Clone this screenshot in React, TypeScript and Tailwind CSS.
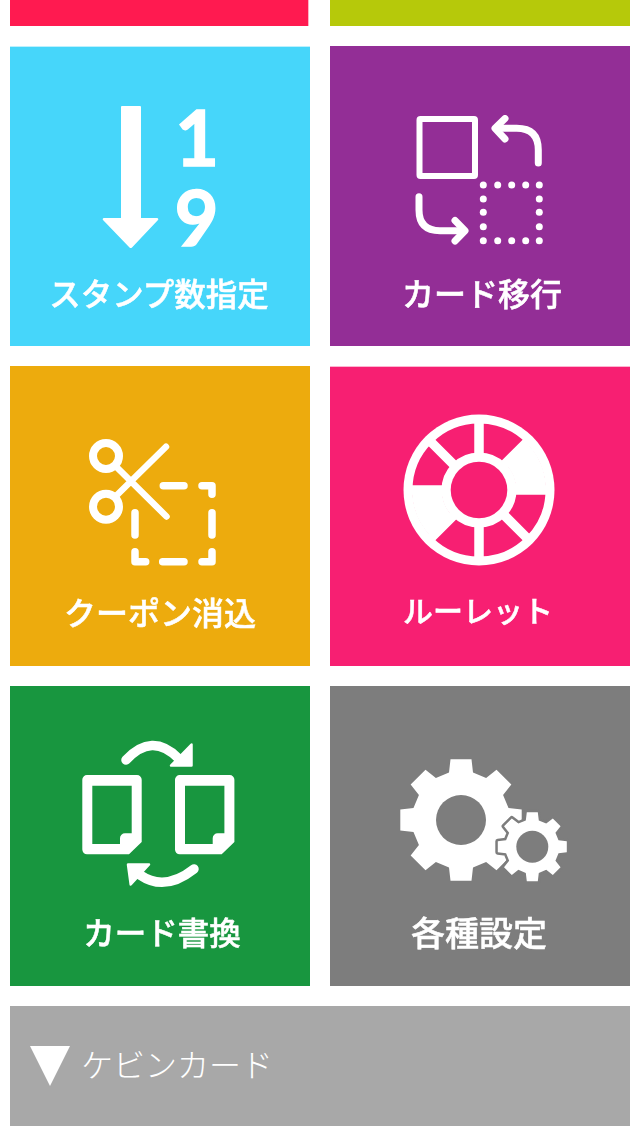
import React from "react";

const JP = "font-['Noto_Sans_CJK_JP','Noto_Sans',sans-serif]";

function gearPoints(cx: number, cy: number, outer: number, body: number, w: number, wTop: number) {
  const pts: string[] = [];
  for (let i = 0; i < 8; i++) {
    const a = (i * Math.PI) / 4;
    const c = Math.cos(a);
    const s = Math.sin(a);
    const rot = (x: number, y: number) =>
      `${(cx + x * c - y * s).toFixed(2)},${(cy + x * s + y * c).toFixed(2)}`;
    const by = -Math.sqrt(body * body - w * w);
    pts.push(rot(-w, by), rot(-wTop, -outer), rot(wTop, -outer), rot(w, by));
  }
  return pts.join(" ");
}

const Svg = ({ children }: { children: React.ReactNode }) => (
  <svg viewBox="0 0 300 225" className="block h-[225px] w-[300px] shrink-0 blur-[0.4px]">
    {children}
  </svg>
);

const StampIcon = () => (
  <Svg>
    <path
      d="M112 60H130A1 1 0 0 1 131 61V172H147A1.2 1.2 0 0 1 148 174L122 201.500A2 2 0 0 1 119.500 201.500L93 174A1.200 1.200 0 0 1 94 172H111V61A1 1 0 0 1 112 60Z"
      fill="#fff"
    />
    <text x="187" y="120" textAnchor="middle" fill="#fff" stroke="#fff" strokeWidth="1.400" fontSize="76" fontWeight="700" fontFamily="Lato, sans-serif">1</text>
    <text x="186.500" y="199.500" textAnchor="middle" fill="#fff" stroke="#fff" strokeWidth="1.400" fontSize="76" fontWeight="700" fontFamily="Lato, sans-serif">9</text>
  </Svg>
);

const MoveIcon = () => {
  const xs = [153.3, 167.7, 181.7, 195.7, 209.3];
  const ys = [139, 153, 166.3, 180.7, 194.7];
  const dots: [number, number][] = [];
  xs.forEach((x, i) =>
    ys.forEach((y, j) => {
      if (i === 0 || i === 4 || j === 0 || j === 4) dots.push([x, y]);
    }),
  );
  return (
    <Svg>
      <rect x="89.500" y="73" width="55.500" height="57" rx="1" fill="none" stroke="#fff" strokeWidth="6" />
      <g fill="none" stroke="#fff" strokeWidth="7" strokeLinecap="round" strokeLinejoin="round">
        <path d="M208.300 117V104Q208.300 82.300 186.700 82.300H167" />
        <path d="M175 72.500L165 82.300L175 93" />
        <path d="M89 150.700V164Q89 184.700 110 184.700H134" />
        <path d="M125 174.500L135 184.700L125 195" />
      </g>
      {dots.map(([x, y]) => (
        <circle key={`${x}-${y}`} cx={x} cy={y} r="3.500" fill="#fff" />
      ))}
    </Svg>
  );
};

const CouponIcon = () => (
  <Svg>
    <g fill="none" stroke="#fff" strokeLinecap="round" strokeLinejoin="round">
      <circle cx="96" cy="90" r="13" strokeWidth="8" />
      <circle cx="96" cy="140.700" r="13" strokeWidth="8" />
      <path d="M106 100.500L156.500 150.500M106 130L156 80.700" strokeWidth="6.500" />
      <path
        d="M153.300 119.700H174M192 119.700H202V128.300M202 146.700V169M192 195.700H202V185.700M152.700 195.700H174M125 185.700V195.700H135.700M125 146.700V169"
        strokeWidth="7.500"
      />
    </g>
  </Svg>
);

const RouletteIcon = () => (
  <Svg>
    <circle cx="149" cy="124" r="75.500" fill="#fff" />
    <circle cx="149" cy="124" r="52" fill="none" stroke="#f71f72" strokeWidth="29" />
    <g stroke="#fff" strokeWidth="9.500">
      <path d="M149 55V193M80 124H218M100 75L198 173M198 75L100 173" />
    </g>
    <g fill="none" stroke="#fff" strokeWidth="30">
      <path d="M185.800 87.200A52 52 0 0 1 201 124" />
      <path d="M112.200 160.800A52 52 0 0 1 97 124" />
    </g>
    <circle cx="149" cy="124" r="28.300" fill="#f71f72" />
  </Svg>
);

const Doc = ({ dx }: { dx: number }) => (
  <path
    transform={`translate(${dx} 0)`}
    fillRule="evenodd"
    fill="#fff"
    d="M77 89H127A4.700 4.700 0 0 1 131.700 93.700V156L119 168.300H77A4.700 4.700 0 0 1 72.300 163.600V93.700A4.700 4.700 0 0 1 77 89ZM82.300 99.700V158H110V152.300A5 5 0 0 1 115 147.300H121.700V99.700Z"
  />
);

const SwapIcon = () => (
  <Svg>
    <Doc dx={0} />
    <Doc dx={92.700} />
    <g fill="none" stroke="#fff" strokeWidth="9.500" strokeLinecap="round">
      <path d="M116 74Q142 46 168 72" />
      <path d="M184 183Q155 206 130 189" />
    </g>
    <g fill="#fff" stroke="#fff" strokeWidth="2.500" strokeLinejoin="round">
      <path d="M181.500 58.500V79.500H161Z" />
      <path d="M118 178.500H139L120.700 198.500Z" />
    </g>
  </Svg>
);

const GearIcon = () => (
  <Svg>
    <polygon points={gearPoints(131, 134, 60.700, 49, 12, 10.500)} fill="#fff" />
    <polygon
      points={gearPoints(202.300, 160.700, 34.500, 27, 6.500, 5.500)}
      fill="#7d7d7d"
      stroke="#7d7d7d"
      strokeWidth="5"
      strokeLinejoin="round"
    />
    <polygon points={gearPoints(202.300, 160.700, 34.500, 27, 6.500, 5.500)} fill="#fff" />
    <circle cx="131" cy="134" r="25" fill="#7d7d7d" />
    <circle cx="202.300" cy="160.700" r="16" fill="#7d7d7d" />
  </Svg>
);

function App() {
  return (
    <div className={`flex h-[1136px] w-[640px] flex-col gap-5 overflow-hidden bg-white px-2.5 ${JP}`}>
      <div className="grid h-[26px] shrink-0 grid-cols-2 gap-5">
        <div className="mr-px border-r-[1px] border-r-[#ffb3c6] bg-[#ff1a50]" />
        <div className="bg-[#b6c90a]" />
      </div>

      <div className="grid shrink-0 grid-cols-2 gap-5">
        <div className="flex h-[300px] flex-col items-center border-t border-t-[#bcf0fd] bg-[#46d6fa] text-white">
          <div className="-mt-px"><StampIcon /></div>
          <span className="-mt-px ml-[-2px] h-11 text-[31.5px] leading-[44px] font-medium blur-[0.4px] [-webkit-text-stroke:0.5px_white]">スタンプ数指定</span>
        </div>
        <div className="flex h-[300px] flex-col items-center bg-[#932e96] text-white">
          <MoveIcon />
          <span className="-mt-px ml-[4px] h-11 text-[32px] leading-[44px] font-medium blur-[0.4px] [-webkit-text-stroke:0.5px_white]">カード移行</span>
        </div>
        <div className="flex h-[300px] flex-col items-center bg-[#edab0d] text-white">
          <CouponIcon />
          <span className="-mt-0.5 h-11 text-[32px] leading-[44px] font-medium blur-[0.4px] [-webkit-text-stroke:0.5px_white]">クーポン消込</span>
        </div>
        <div className="flex h-[300px] flex-col items-center border-t border-t-[#fdb5d0] bg-[#f71f72] text-white">
          <div className="-mt-px"><RouletteIcon /></div>
          <span className="-mt-1 ml-[-4px] h-11 text-[30px] leading-[44px] font-medium blur-[0.4px] [-webkit-text-stroke:0.5px_white]">ルーレット</span>
        </div>
        <div className="flex h-[300px] flex-col items-center bg-[#18963f] text-white">
          <SwapIcon />
          <span className="-mt-0.5 ml-[4px] h-11 text-[31.5px] leading-[44px] font-medium blur-[0.4px] [-webkit-text-stroke:0.5px_white]">カード書換</span>
        </div>
        <div className="flex h-[300px] flex-col items-center bg-[#7d7d7d] text-white">
          <GearIcon />
          <span className="-mt-px ml-[-2px] h-11 text-[34px] leading-[44px] font-medium blur-[0.4px] [-webkit-text-stroke:0.5px_white]">各種設定</span>
        </div>
      </div>

      <div className="flex h-[120px] shrink-0 items-center gap-[11px] bg-[#a8a8a8] pl-5 text-white">
        <svg viewBox="0 0 40 40" className="h-10 w-10 shrink-0">
          <path d="M0 0H40L20 40Z" fill="#fff" />
        </svg>
        <span className="mb-1.5 text-[32px] leading-none font-light">ケビンカード</span>
      </div>
    </div>
  );
}

export default App;
